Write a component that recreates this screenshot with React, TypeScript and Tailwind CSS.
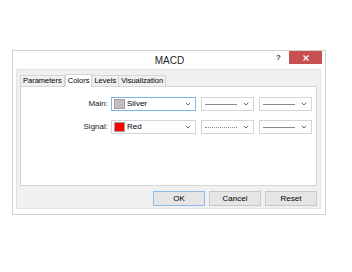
import React from "react";

const Chevron = () => (
  <svg width="6" height="4" viewBox="0 0 6 4" className="shrink-0">
    <path d="M0.8 0.8 L3 3 L5.2 0.8" fill="none" stroke="#666" strokeWidth="1" />
  </svg>
);

function ColorCombo({ color, name, focused }: { color: string; name: string; focused?: boolean }) {
  return (
    <div
      className={`w-[85px] h-[14px] bg-white border flex items-center pl-[2px] pr-[4px] ${
        focused ? "border-[#7eb4ea]" : "border-[#d5d5d5]"
      }`}
    >
      <div className="w-[11px] h-[10px] border border-[#a0a0a0]" style={{ backgroundColor: color }} />
      <span className="ml-[2px] flex-1 text-[8px] leading-none text-[#000]">{name}</span>
      <Chevron />
    </div>
  );
}

function LineCombo({ dotted }: { dotted?: boolean }) {
  return (
    <div className="w-[53px] h-[14px] bg-white border border-[#d5d5d5] flex items-center pl-[3px] pr-[4px] gap-[6px]">
      <div
        className={`flex-1 h-0 border-t ${dotted ? "border-dotted border-[#888]" : "border-solid border-[#8a8a8a]"}`}
      />
      <Chevron />
    </div>
  );
}

function Btn({ label, primary }: { label: string; primary?: boolean }) {
  return (
    <div
      className={`w-[52px] h-[15px] flex items-center justify-center bg-[#e5e5e5] border text-[8px] leading-none text-[#000] ${
        primary ? "border-[#8fbbe6]" : "border-[#c8c8c8]"
      }`}
    >
      {label}
    </div>
  );
}

export default function App() {
  const tabs = ["Parameters", "Colors", "Levels", "Visualization"];
  return (
    <div
      className="w-[352px] h-[272px] bg-white pl-[12px] pt-[50px]"
      style={{ fontFamily: '"Liberation Sans", Arial, sans-serif' }}
    >
      <div className="w-[314px] h-[165px] border border-[#d2d2d2] bg-white flex flex-col pl-[3px] pr-[4px] pb-[5px]">
        {/* title bar */}
        <div className="h-[18px] flex items-start relative shrink-0">
          <div className="flex-1 flex justify-center pt-[5px] pl-[2px]">
            <span className="text-[10px] leading-none text-[#222]">MACD</span>
          </div>
          <span className="absolute right-[40px] top-[3px] text-[8px] font-bold leading-none text-[#444]">?</span>
          <div className="absolute right-[-1px] top-0 w-[33px] h-[13px] bg-[#c75050] flex items-center justify-center">
            <svg width="6" height="6" viewBox="0 0 6 6">
              <path d="M0.5 0.5 L5.5 5.5 M5.5 0.5 L0.5 5.5" stroke="#fff" strokeWidth="1.2" />
            </svg>
          </div>
        </div>
        {/* client */}
        <div className="flex-1 bg-[#f0f0f0] border border-[#e2e2e2] flex flex-col pl-[3px] pr-[3px] pt-[4px]">
          <div className="h-[12px] flex items-end pl-[1px]">
            {tabs.map((t) =>
              t === "Colors" ? (
                <div
                  key={t}
                  className="h-[13px] px-[2px] bg-white border border-b-0 border-[#d5d5d5] flex items-center text-[7.5px] leading-none text-[#000] relative top-[1px] z-10"
                >
                  {t}
                </div>
              ) : (
                <div
                  key={t}
                  className="h-[11px] px-[2px] bg-[#f0f0f0] border border-b-0 border-[#d5d5d5] -ml-[1px] flex items-center text-[7.5px] leading-none text-[#000]"
                >
                  {t}
                </div>
              )
            )}
          </div>
          <div className="h-[100px] w-[297px] bg-white border border-[#d5d5d5] flex flex-col pt-[10px] gap-[9px]">
            <div className="flex items-center">
              <span className="w-[87px] text-right text-[8px] leading-none text-[#222]">Main:</span>
              <div className="ml-[3px] flex gap-[5px]">
                <ColorCombo color="#c0c0c0" name="Silver" focused />
                <LineCombo />
                <LineCombo />
              </div>
            </div>
            <div className="flex items-center">
              <span className="w-[87px] text-right text-[8px] leading-none text-[#222]">Signal:</span>
              <div className="ml-[3px] flex gap-[5px]">
                <ColorCombo color="#ff0000" name="Red" />
                <LineCombo dotted />
                <LineCombo />
              </div>
            </div>
          </div>
          <div className="w-[297px] flex justify-end gap-[4px] mt-[5px]">
            <Btn label="OK" primary />
            <Btn label="Cancel" />
            <Btn label="Reset" />
          </div>
        </div>
      </div>
    </div>
  );
}
